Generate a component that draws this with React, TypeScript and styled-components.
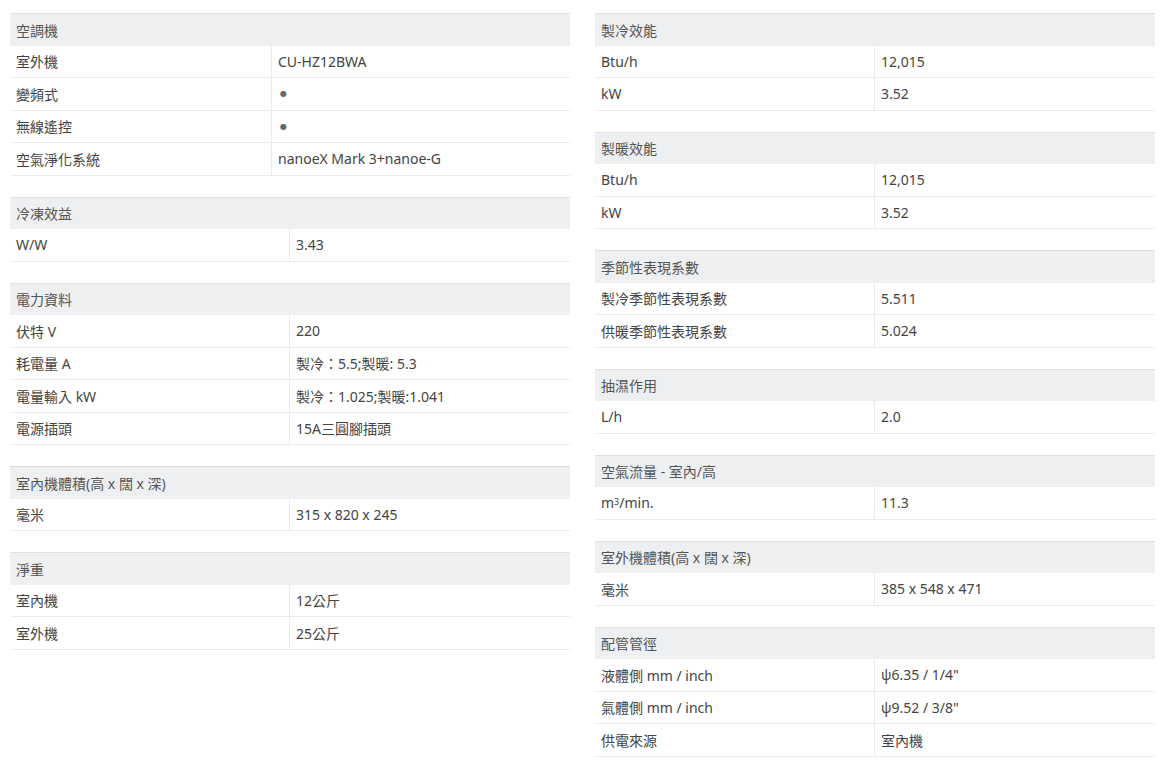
import React from 'react';
import styled, { createGlobalStyle } from 'styled-components';

type Spec = {
  title: string;
  labelWidth?: number;
  rows: [React.ReactNode, React.ReactNode][];
};

const Dot = styled.span`
  color: #666;
  font-family: "DejaVu Sans", sans-serif;
  font-size: 8px;
  margin-left: 2px;
`;

const leftSpecs: Spec[] = [
  {
    title: '空調機',
    labelWidth: 261,
    rows: [
      ['室外機', 'CU-HZ12BWA'],
      ['變頻式', <Dot>●</Dot>],
      ['無線遙控', <Dot>●</Dot>],
      ['空氣淨化系統', 'nanoeX Mark 3+nanoe-G'],
    ],
  },
  { title: '冷凍效益', rows: [['W/W', '3.43']] },
  {
    title: '電力資料',
    rows: [
      ['伏特 V', '220'],
      ['耗電量 A', '製冷：5.5;製暖: 5.3'],
      ['電量輸入 kW', '製冷：1.025;製暖:1.041'],
      ['電源插頭', '15A三圓腳插頭'],
    ],
  },
  { title: '室內機體積(高 x 闊 x 深)', rows: [['毫米', '315 x 820 x 245']] },
  {
    title: '淨重',
    rows: [
      ['室內機', '12公斤'],
      ['室外機', '25公斤'],
    ],
  },
];

const rightSpecs: Spec[] = [
  {
    title: '製冷效能',
    rows: [
      ['Btu/h', '12,015'],
      ['kW', '3.52'],
    ],
  },
  {
    title: '製暖效能',
    rows: [
      ['Btu/h', '12,015'],
      ['kW', '3.52'],
    ],
  },
  {
    title: '季節性表現系數',
    rows: [
      ['製冷季節性表現系數', '5.511'],
      ['供暖季節性表現系數', '5.024'],
    ],
  },
  { title: '抽濕作用', rows: [['L/h', '2.0']] },
  {
    title: '空氣流量 - 室內/高',
    rows: [
      [
        <>
          m<sup>3</sup>/min.
        </>,
        '11.3',
      ],
    ],
  },
  { title: '室外機體積(高 x 闊 x 深)', rows: [['毫米', '385 x 548 x 471']] },
  {
    title: '配管管徑',
    rows: [
      ['液體側 mm / inch', 'ψ6.35 / 1/4"'],
      ['氣體側 mm / inch', 'ψ9.52 / 3/8"'],
      ['供電來源', '室內機'],
    ],
  },
];

const SpecTable = ({ spec }: { spec: Spec }) => (
  <Table>
    <HeadRow>{spec.title}</HeadRow>
    {spec.rows.map(([label, value], i) => (
      <Row key={i} $labelWidth={spec.labelWidth ?? 279}>
        <Label>{label}</Label>
        <Value>{value}</Value>
      </Row>
    ))}
  </Table>
);

const App = () => (
  <>
    <GlobalStyle />
    <Page>
      <Column>
        {leftSpecs.map((s) => (
          <SpecTable key={s.title} spec={s} />
        ))}
      </Column>
      <Column>
        {rightSpecs.map((s) => (
          <SpecTable key={s.title} spec={s} />
        ))}
      </Column>
    </Page>
  </>
);

export default App;

const GlobalStyle = createGlobalStyle`
  body {
    margin: 0;
    background: #fff;
    font-family: "Noto Sans", "Noto Sans CJK TC", sans-serif;
    font-size: 14px;
    color: #444;
  }
`;

const Page = styled.div`
  display: grid;
  grid-template-columns: 560px 560px;
  column-gap: 25px;
  padding: 13px 0 0 10px;
`;

const Column = styled.div`
  display: flex;
  flex-direction: column;
  gap: 21px;
`;

const Table = styled.div`
  display: flex;
  flex-direction: column;
`;

const HeadRow = styled.div`
  box-sizing: border-box;
  height: 32.5px;
  display: flex;
  align-items: center;
  padding: 0 6px;
  background: #eeeff1;
  border-top: 1px solid #dedfe1;
  color: #555;
`;

const Row = styled.div<{ $labelWidth: number }>`
  box-sizing: border-box;
  height: 32.5px;
  display: grid;
  grid-template-columns: ${(p) => p.$labelWidth}px 1fr;
  border-bottom: 1px solid #e6ecf1;
`;

const Label = styled.div`
  display: flex;
  align-items: center;
  padding: 0 6px;

  sup {
    font-size: 9px;
    line-height: 0;
    position: relative;
    top: -1px;
  }
`;

const Value = styled.div`
  display: flex;
  align-items: center;
  padding: 0 6px;
  border-left: 1px solid #e6ecf1;
`;
